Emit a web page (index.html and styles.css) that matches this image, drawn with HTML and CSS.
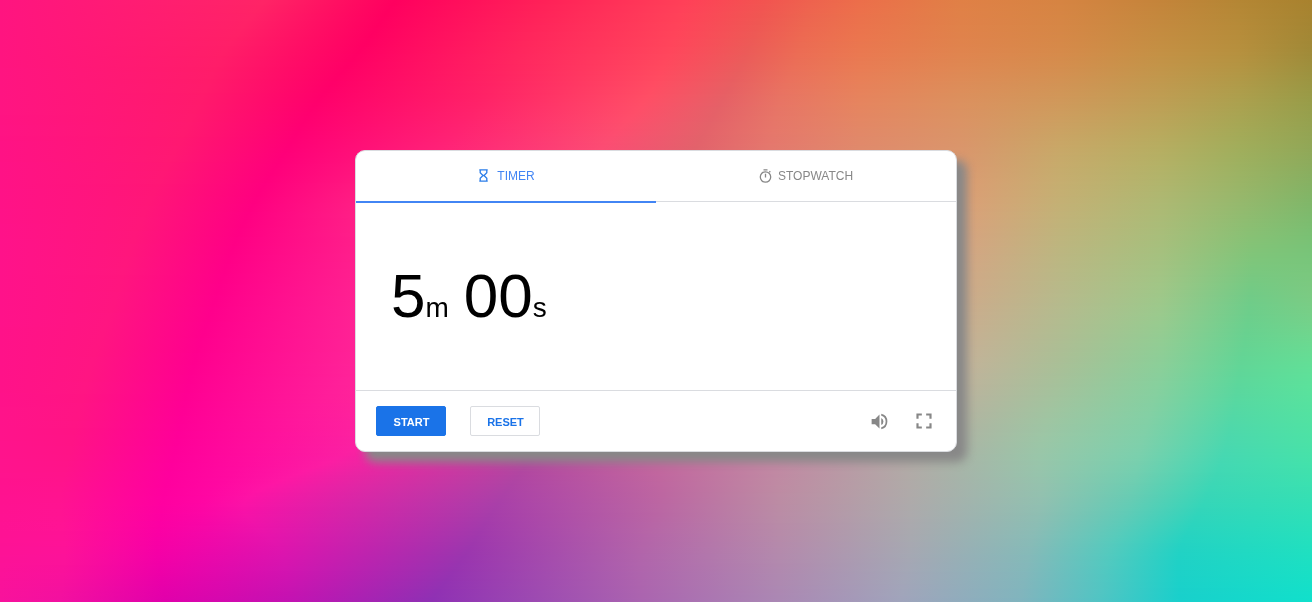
FILE: index.html
```
<!DOCTYPE html>
<html lang="en">
<head>
<meta charset="utf-8">
<title>Timer</title>
<link rel="stylesheet" href="styles.css">
</head>
<body>
<canvas class="backdrop" id="backdrop" width="1312" height="602"></canvas>
<main class="card">
  <nav class="tabs">
    <div class="tab tab-active">
      <svg class="tab-icon hourglass" width="9" height="13" viewBox="0 0 9 13" fill="none" stroke="currentColor" stroke-width="1.3"><path d="M.3 .8h8.4M.3 12.2h8.4M1.2 1v2.7L4 6.5 1.2 9.3V12M7.8 1v2.7L5 6.5l2.8 2.8V12M3.5 6.5h2"/></svg>
      <span>TIMER</span>
    </div>
    <div class="tab">
      <svg class="tab-icon watch" width="13" height="14" viewBox="0 0 13 14" fill="none" stroke="currentColor" stroke-width="1.3"><circle cx="6.5" cy="8" r="5.2"/><path d="M4.5.8h4M6.5 4.8v3.8M10.3 3.2l1-1"/></svg>
      <span>STOPWATCH</span>
    </div>
  </nav>
  <section class="time">
    <span class="num">5</span><span class="unit unit-min">m</span><span class="num">00</span><span class="unit">s</span>
  </section>
  <footer class="controls">
    <button class="btn btn-primary">START</button>
    <button class="btn btn-outline">RESET</button>
    <svg class="control-icon sound" width="24" height="24" viewBox="0 0 24 24" fill="currentColor"><path d="M3 9v6h4l5 5V4L7 9H3zm13.5 3A4.5 4.5 0 0 0 14 7.97v8.05A4.5 4.5 0 0 0 16.5 12zM14 3.23v2.06a7 7 0 0 1 0 13.42v2.06a9 9 0 0 0 0-17.54z"/></svg>
    <svg class="control-icon" width="26" height="26" viewBox="0 0 24 24" fill="currentColor"><path d="M7 14H5v5h5v-2H7v-3zM5 10h2V7h3V5H5v5zm12 7h-3v2h5v-5h-2v3zM14 5v2h3v3h2V5h-5z"/></svg>
  </footer>
</main>
<script src="backdrop.js"></script>
</body>
</html>
```

FILE: styles.css
```
body {
  margin: 0;
  height: 100vh;
  display: flex;
  align-items: center;
  justify-content: center;
  overflow: hidden;
  font-family: "Liberation Sans", Arial, sans-serif;
  background: #ff0a85;
}
.backdrop {
  position: absolute;
  top: 0;
  left: 0;
  z-index: -1;
}
.card {
  box-sizing: border-box;
  width: 602px;
  height: 302px;
  display: flex;
  flex-direction: column;
  background: #fff;
  border: 1px solid #dadce0;
  border-radius: 10px;
  box-shadow: 10px 10px 10px #888;
}
.tabs {
  display: flex;
  height: 52px;
}
.tab {
  box-sizing: border-box;
  width: 50%;
  height: 51px;
  display: flex;
  align-items: center;
  justify-content: center;
  padding-bottom: 1px;
  border-bottom: 1px solid #dadce0;
  color: #878787;
  font-size: 12px;
}
.tab-active {
  height: 52px;
  padding-left: 2px;
  color: #4285f4;
  border-bottom: 2px solid #4285f4;
}
.tab-icon {
  margin-right: 6px;
}
.hourglass {
  margin-right: 9px;
  color: #2b7de9;
}
.time {
  flex: 1;
  display: flex;
  align-items: baseline;
  padding: 56px 0 0 35px;
  color: #000;
}
.num {
  font-size: 62px;
  line-height: 74px;
}
.unit {
  font-size: 28px;
}
.unit-min {
  margin-right: 15px;
}
.controls {
  box-sizing: border-box;
  height: 61px;
  display: flex;
  align-items: center;
  padding: 0 19px 0 20px;
  border-top: 1px solid #dadce0;
}
.btn {
  box-sizing: border-box;
  width: 70px;
  height: 30px;
  padding: 1px 0 0 1px;
  border: 1px solid #dadce0;
  border-radius: 2px;
  font: bold 11px "Liberation Sans", Arial, sans-serif;
}
.btn-primary {
  margin-right: 24px;
  color: #fff;
  background: #1a73e8;
  border-color: #1a73e8;
}
.btn-outline {
  margin-right: auto;
  color: #1a73e8;
  background: #fff;
}
.control-icon {
  color: #878787;
}
.sound {
  width: 21px;
  height: 21px;
  margin-right: 21px;
}
```

FILE: backdrop.js
```
// Gradient mesh: each row is [y, [x, colour], ...]; positions and colours blend between rows.
const rows = [
  [0,   [0,'ff1480'],[265,'ff2466'],[395,'ff005f'],[540,'ff2058'],[685,'ff4058'],[765,'f25450'],[810,'ee624e'],[860,'ec6e4a'],[960,'e08046'],[1060,'d68442'],[1160,'c4843a'],[1240,'b48634'],[1312,'a8822e']],
  [50,  [0,'ff1480'],[225,'ff1e68'],[360,'ff0064'],[520,'ff265e'],[670,'ff465c'],[748,'ec5b58'],[800,'ec6c54'],[860,'ea7850'],[960,'e0844e'],[1060,'d68a4a'],[1160,'c49044'],[1240,'b6903e'],[1312,'a08a38']],
  [100, [0,'ff1482'],[200,'ff1a6c'],[318,'ff006c'],[480,'ff2268'],[645,'ff4e66'],[722,'e66066'],[780,'e87464'],[860,'e6845e'],[960,'dc905e'],[1060,'d0985a'],[1160,'be9e54'],[1240,'aca04e'],[1312,'989c48']],
  [150, [0,'ff1285'],[175,'ff1872'],[286,'ff0078'],[440,'ff2278'],[600,'fc4c74'],[694,'e2626c'],[770,'e4786e'],[860,'e08a6c'],[960,'da966c'],[1060,'c8a868'],[1160,'b6ae62'],[1240,'a0ae5c'],[1312,'90a858']],
  [200, [0,'ff1287'],[150,'ff1678'],[255,'ff0080'],[380,'ff2484'],[560,'ff487e'],[665,'da5c78'],[770,'de7c78'],[860,'de9074'],[960,'dc9e76'],[1060,'c4b074'],[1160,'aeb872'],[1240,'96b86c'],[1312,'80b668']],
  [250, [0,'ff128a'],[130,'ff167c'],[232,'ff0086'],[370,'ff228c'],[520,'ff4088'],[640,'d45882'],[770,'d88080'],[860,'da947e'],[960,'d6a482'],[1060,'bcb680'],[1160,'a6c07e'],[1252,'82c478'],[1312,'78c478']],
  [300, [0,'ff128a'],[115,'ff1580'],[215,'ff008b'],[360,'ff2292'],[480,'ff3a90'],[610,'cc5488'],[770,'d0808a'],[860,'d49888'],[960,'ceaa8a'],[1060,'b6ba8c'],[1160,'9ec88a'],[1250,'70cc88'],[1312,'7acc84']],
  [370, [0,'ff1289'],[90,'ff1582'],[192,'ff0090'],[350,'ff2298'],[425,'ff3098'],[570,'c45090'],[740,'c88096'],[860,'ca9c96'],[960,'c2b29a'],[1060,'a8c098'],[1160,'8acf9a'],[1240,'60d698'],[1312,'60e098']],
  [450, [0,'ff138c'],[70,'ff1387'],[175,'ff009a'],[260,'ff0f9e'],[350,'fb20a2'],[535,'b64a9c'],[660,'c4689c'],[780,'c488a2'],[910,'b4aaa4'],[1040,'9ac6a8'],[1140,'7cd0ac'],[1225,'48d8b0'],[1312,'48e2a8']],
  [500, [0,'ff1290'],[60,'ff1390'],[163,'ff00a0'],[205,'ff06a3'],[246,'fc12a6'],[500,'aa40a8'],[660,'bc66a2'],[780,'bc8ca4'],[910,'aeaaaa'],[1040,'92c0b0'],[1130,'66ccb4'],[1205,'36d6b8'],[1312,'34e0b4']],
  [550, [0,'fd1296'],[65,'fd1298'],[158,'f600a6'],[210,'ec08aa'],[280,'de14ae'],[468,'9c36ae'],[640,'b264aa'],[780,'b48aac'],[910,'a6a8b2'],[1030,'86bab8'],[1110,'54cabe'],[1180,'22d2c4'],[1312,'20e0c0']],
  [602, [0,'f8129c'],[60,'f210a0'],[165,'e000ab'],[220,'d408ae'],[290,'c212b2'],[430,'8e30b4'],[640,'aa64b0'],[780,'aa88b4'],[900,'a0a4bc'],[1020,'80b4be'],[1100,'50c4c4'],[1180,'18d0cc'],[1312,'10e0cc']]
];
const channels = hex => [0, 2, 4].map(i => parseInt(hex.substr(i, 2), 16));
const mesh = rows.map(([y, ...points]) => ({ y, points: points.map(([x, c]) => [x, ...channels(c)]) }));
const ctx = document.getElementById('backdrop').getContext('2d');

// Catmull-Rom blend with row spacing taken into account.
function blend(a, b, c, d, ya, yb, yc, yd, t) {
  const h = yc - yb;
  const m1 = (c - a) / (yc - ya) * h;
  const m2 = (d - b) / (yd - yb) * h;
  const t2 = t * t, t3 = t2 * t;
  return (2 * t3 - 3 * t2 + 1) * b + (t3 - 2 * t2 + t) * m1 + (3 * t2 - 2 * t3) * c + (t3 - t2) * m2;
}

for (let y = 0, k = 0; y < 602; y++) {
  while (y >= mesh[k + 1].y) k++;
  const r1 = mesh[k], r2 = mesh[k + 1];
  const r0 = mesh[k - 1] || r1, r3 = mesh[k + 2] || r2;
  const t = (y - r1.y) / (r2.y - r1.y);
  const fill = ctx.createLinearGradient(0, 0, 1312, 0);
  r1.points.forEach((p, i) => {
    const [x, r, g, b] = p.map((v, j) =>
      blend(r0.points[i][j], v, r2.points[i][j], r3.points[i][j], r0.y, r1.y, r2.y, r3.y, t));
    fill.addColorStop(Math.min(1, Math.max(0, x / 1312)), `rgb(${Math.round(r)},${Math.round(g)},${Math.round(b)})`);
  });
  ctx.fillStyle = fill;
  ctx.fillRect(0, y, 1312, 1);
}
```
